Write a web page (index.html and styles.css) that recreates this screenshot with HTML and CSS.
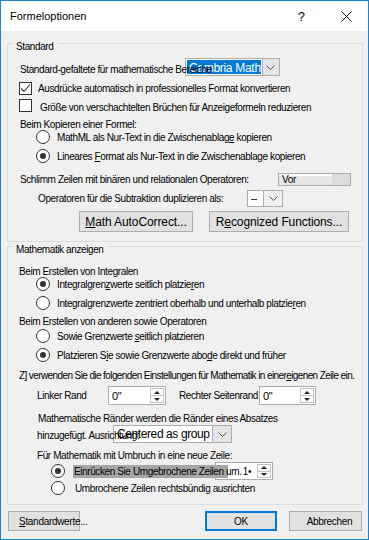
FILE: index.html
```html
<!DOCTYPE html>
<html lang="de">
<head>
    <meta charset="UTF-8">
    <meta name="viewport" content="width=device-width, initial-scale=1.0">
    <title>Formeloptionen</title>
    <link rel="stylesheet" href="styles.css">
</head>
<body>
<div class="window">
    <div class="titlebar">
        <span class="title">Formeloptionen</span>
        <span class="help">?</span>
        <span class="close">
            <svg width="11" height="11" viewBox="0 0 11 11"><path d="M0.5 0.5L10.5 10.5M10.5 0.5L0.5 10.5" stroke="#111" stroke-width="1" fill="none"/></svg>
        </span>
    </div>

    <div class="content">
        <!-- Standard -->
        <div class="group group-std">
            <div class="group-title">Standard</div>

            <div class="row r-font">
                <span class="lbl lbl-font">Standard-gefaltete für mathematische Bereiche</span>
                <div class="combo combo-font">
                    <span class="sel">Cambria Math</span>
                    <span class="drop"><svg width="9" height="5" viewBox="0 0 9 5"><path d="M0.5 0.5L4.5 4.5L8.5 0.5" fill="none" stroke="#555"/></svg></span>
                </div>
            </div>

            <div class="row r-cb1">
                <span class="checkbox">
                    <svg width="11" height="11" viewBox="0 0 11 11"><path d="M1 5.5L4 8.5L10 1.5" fill="none" stroke="#333" stroke-width="1.1"/></svg>
                </span>
                <span class="cb-text">Ausdrücke automatisch in professionelles Format konvertieren</span>
            </div>

            <div class="row r-cb2">
                <span class="checkbox"></span>
                <span class="cb-text cb-text2">Größe von verschachtelten Brüchen für Anzeigeformeln reduzieren</span>
            </div>

            <div class="row r-label r-kop">Beim Kopieren einer Formel:</div>

            <div class="row r-radio r-rad1">
                <span class="radio"></span>
                <span class="radio-text">MathML als Nur-Text in die Zwischenablag<u>e</u> kopieren</span>
            </div>
            <div class="row r-radio r-rad2">
                <span class="radio checked"></span>
                <span class="radio-text">Lineares <u>F</u>ormat als Nur-Text in die Zwischenablage kopieren</span>
            </div>

            <div class="row r-break">
                <span class="lbl">Schlimm Zeilen mit binären und relationalen Operatoren:</span>
                <div class="combo combo-break">
                    <span class="combo-val">Vor</span>
                    <span class="drop drop-flat"></span>
                </div>
            </div>

            <div class="row r-minus">
                <span class="lbl lbl-minus">Operatoren für die Subtraktion duplizieren als:</span>
                <div class="combo combo-minus">
                    <span class="combo-val">--</span>
                    <span class="drop"><svg width="9" height="5" viewBox="0 0 9 5"><path d="M0.5 0.5L4.5 4.5L8.5 0.5" fill="none" stroke="#555"/></svg></span>
                </div>
            </div>

            <div class="row r-btns">
                <button class="btn btn-autocorrect"><u>M</u>ath AutoCorrect...</button>
                <button class="btn btn-functions">R<u>e</u>cognized Functions...</button>
            </div>
        </div>

        <!-- Mathematik anzeigen -->
        <div class="group group-disp">
            <div class="group-title">Mathematik anzeigen</div>

            <div class="row r-label r-integ">Beim Erstellen von Integralen</div>
            <div class="row r-radio r-rad3">
                <span class="radio checked"></span>
                <span class="radio-text">Integralgren<u>z</u>werte seitlich platzie<u>r</u>en</span>
            </div>
            <div class="row r-radio r-rad4">
                <span class="radio"></span>
                <span class="radio-text">Integralgrenzwerte zentriert oberhalb und unterhalb platzie<u>r</u>en</span>
            </div>

            <div class="row r-label r-other">Beim Erstellen von anderen sowie Operatoren</div>
            <div class="row r-radio r-rad5">
                <span class="radio"></span>
                <span class="radio-text">Sowie Grenzwerte <u>s</u>eitlich platzieren</span>
            </div>
            <div class="row r-radio r-rad6">
                <span class="radio checked"></span>
                <span class="radio-text">Platzieren S<u>i</u>e sowie Grenzwerte abo<u>d</u>e direkt und früher</span>
            </div>

            <div class="row r-label r-zeile">Z] verwenden Sie die folgenden Einstellungen für Mathematik in einer <u>e</u>igenen Zeile ein.</div>

            <div class="row r-margins">
                <span class="lbl lbl-left">Linker Rand</span>
                <div class="spin spin-left">
                    <span class="spin-val">0"</span>
                    <span class="spin-btns"><span class="up"></span><span class="down"></span></span>
                </div>
                <span class="lbl lbl-right">Rechter Seitenrand</span>
                <div class="spin spin-right">
                    <span class="spin-val">0"</span>
                    <span class="spin-btns"><span class="up"></span><span class="down"></span></span>
                </div>
            </div>

            <div class="row r-label r-raender">Mathematische Ränder werden die Ränder eines Absatzes</div>

            <div class="row r-align">
                <span class="lbl lbl-align">hinzugefügt. Ausrichtung:</span>
                <div class="combo combo-align">
                    <span class="combo-val">Centered as group</span>
                    <span class="drop"><svg width="9" height="5" viewBox="0 0 9 5"><path d="M0.5 0.5L4.5 4.5L8.5 0.5" fill="none" stroke="#555"/></svg></span>
                </div>
            </div>

            <div class="row r-label r-wrap">Für Mathematik mit Umbruch in eine neue Zeile:</div>

            <div class="row r-indent">
                <span class="radio checked"></span>
                <span class="lbl lbl-indent">Einrücken Sie Umgebrochene Zeilen um.</span>
                <div class="spin spin-indent">
                    <span class="spin-val">1•</span>
                    <span class="spin-btns"><span class="up"></span><span class="down"></span></span>
                </div>
            </div>
            <div class="row r-right">
                <span class="radio"></span>
                <span class="radio-text">Umbrochene Zeilen rechtsbündig ausrichten</span>
            </div>
        </div>

        <div class="footer">
            <button class="btn btn-default"><u>S</u>tandardwerte...</button>
            <button class="btn btn-ok">OK</button>
            <button class="btn btn-cancel">Abbrechen</button>
        </div>
    </div>
</div>
</body>
</html>
```

FILE: styles.css
```css
body {
    margin: 0;
    padding: 0;
    font-family: "Liberation Sans", Arial, sans-serif;
    font-size: 10px;
    letter-spacing: -0.4px;
    color: #000;
    background-color: #fff;
}

.window {
    box-sizing: border-box;
    width: 369px;
    height: 540px;
    border: 1px solid #1883d7;
    background-color: #f0f0f0;
    display: flex;
    flex-direction: column;
}

/* title bar */
.titlebar {
    height: 30px;
    background-color: #fff;
    display: flex;
    align-items: center;
    padding-left: 9px;
}

.title {
    font-size: 11px;
    letter-spacing: 0;
}

.help {
    margin-left: auto;
    font-size: 13px;
    letter-spacing: 0;
}

.close {
    display: flex;
    margin-left: 36px;
    margin-right: 16px;
}

.content {
    padding: 12px 5px 0 6px;
}

/* group boxes */
.group {
    border: 1px solid #dcdcdc;
    display: flex;
    flex-direction: column;
    padding-bottom: 9px;
}

.group-disp {
    margin-top: 4px;
}

.group-title {
    align-self: flex-start;
    height: 12px;
    line-height: 12px;
    margin: -3px 0 0 5px;
    padding: 0 5px 0 3px;
    background-color: #f0f0f0;
}

.row {
    display: flex;
    align-items: center;
    white-space: nowrap;
}

.lbl {
    position: relative;
    z-index: 1;
}

.r-label {
    height: 12px;
    padding-left: 11px;
}

/* checkboxes */
.checkbox {
    box-sizing: border-box;
    width: 13px;
    height: 13px;
    border: 1px solid #333;
    background-color: #fff;
    display: flex;
    align-items: center;
    justify-content: center;
}

.cb-text {
    margin-left: 6px;
}

.cb-text2 {
    margin-left: 8px;
    padding-top: 3px;
}

/* radios */
.radio {
    box-sizing: border-box;
    width: 14px;
    height: 14px;
    border: 1px solid #333;
    border-radius: 50%;
    background-color: #fff;
    display: flex;
    align-items: center;
    justify-content: center;
    flex-shrink: 0;
}

.radio.checked::after {
    content: "";
    width: 6px;
    height: 6px;
    border-radius: 50%;
    background-color: #333;
}

.r-radio {
    height: 14px;
    padding-left: 28px;
}

.radio-text {
    margin-left: 7px;
}

/* combos */
.combo {
    box-sizing: border-box;
    display: flex;
    border: 1px solid #adadad;
    background-color: #fff;
}

.drop {
    width: 18px;
    display: flex;
    align-items: center;
    justify-content: center;
    background-color: #e5e5e5;
    border-left: 1px solid #adadad;
}

.combo-val {
    flex: 1;
    display: flex;
    align-items: center;
    padding-left: 3px;
}

/* standard group rows */
.r-font {
    margin-top: 5px;
    height: 18px;
    padding-left: 12px;
}

.lbl-font {
    width: 165px;
    padding-top: 4px;
}

.combo-font {
    width: 95px;
    height: 18px;
    padding: 1px;
}

.sel {
    flex: 1;
    background-color: #0078d7;
    color: #fff;
    font-size: 12px;
    letter-spacing: -0.3px;
    line-height: 16px;
    padding-left: 2px;
    margin-right: 1px;
}

.combo-font .drop {
    margin: -1px -1px -1px 0;
}

.r-cb1 {
    margin-top: 6px;
    height: 13px;
    padding-left: 11px;
}

.r-cb2 {
    margin-top: 4px;
    height: 13px;
    padding-left: 11px;
}

.r-kop {
    margin-top: 6px;
    padding-left: 12px;
}

.r-rad2 {
    margin-top: 5px;
}

.r-break {
    margin-top: 10px;
    height: 13px;
    padding-left: 12px;
}

.combo-break {
    margin-left: auto;
    margin-right: 11px;
    width: 73px;
    height: 13px;
    background: linear-gradient(#fff 0 2px, #e6e6e6 2px);
}

.combo-break .combo-val {
    padding-left: 3px;
}

.drop-flat {
    background-color: #dcdcdc;
    border-left: none;
}

.r-minus {
    margin-top: 4px;
    height: 17px;
    padding-left: 30px;
}

.lbl-minus {
    width: 209px;
}

.combo-minus {
    width: 36px;
    height: 17px;
}

.combo-minus .drop {
    background-color: #f0f0f0;
}

.r-btns {
    margin-top: 4px;
    height: 21px;
    padding-left: 71px;
    gap: 16px;
}

/* buttons */
.btn {
    box-sizing: border-box;
    height: 21px;
    padding: 0;
    background-color: #e1e1e1;
    border: 1px solid #adadad;
    font-family: "Liberation Sans", Arial, sans-serif;
    font-size: 12px;
    letter-spacing: -0.1px;
    color: #000;
    white-space: nowrap;
}

.btn-autocorrect {
    width: 114px;
}

.btn-functions {
    width: 140px;
}

/* display group rows */
.r-integ {
    margin-top: 9px;
}

.r-rad4 {
    margin-top: 5px;
}

.r-other {
    margin-top: 5px;
}

.r-rad5 {
    margin-top: 2px;
}

.r-rad6 {
    margin-top: 5px;
}

.r-zeile {
    margin-top: 7px;
    letter-spacing: -0.6px;
}

.r-margins {
    margin-top: 5px;
    height: 19px;
    padding-left: 29px;
}

.lbl-left {
    width: 71px;
}

.lbl-right {
    margin-left: 13px;
    width: 80px;
}

/* spin boxes */
.spin {
    box-sizing: border-box;
    display: flex;
    height: 19px;
    border: 1px solid #adadad;
    background-color: #fff;
}

.spin-left {
    width: 58px;
}

.spin-right {
    width: 57px;
}

.spin-val {
    flex: 1;
    display: flex;
    align-items: center;
    padding-left: 3px;
    font-size: 11px;
}

.spin-btns {
    width: 14px;
    display: flex;
    flex-direction: column;
    padding: 1px 1px 1px 0;
}

.spin-btns span {
    flex: 1;
    display: flex;
    align-items: center;
    justify-content: center;
    border: 1px solid #c4c4c4;
}

.spin-btns .down {
    border-top: none;
}

.spin-btns .up::after {
    content: "";
    border-left: 3px solid transparent;
    border-right: 3px solid transparent;
    border-bottom: 3px solid #222;
}

.spin-btns .down::after {
    content: "";
    border-left: 3px solid transparent;
    border-right: 3px solid transparent;
    border-top: 3px solid #222;
}

.r-raender {
    margin-top: 7px;
    padding-left: 30px;
}

.r-align {
    margin-top: 1px;
    height: 18px;
    padding-left: 29px;
}

.lbl-align {
    width: 76px;
    padding-top: 2px;
}

.combo-align {
    width: 119px;
    height: 18px;
}

.combo-align .combo-val {
    font-size: 12px;
    letter-spacing: -0.4px;
}

.r-wrap {
    margin-top: 6px;
    padding-left: 29px;
}

.r-indent {
    margin-top: 1px;
    height: 18px;
    padding-left: 43px;
}

.lbl-indent {
    width: 154px;
    margin-left: 8px;
    padding-left: 1px;
    line-height: 13px;
    background-color: #a6a6a6;
}

.spin-indent {
    width: 58px;
    height: 18px;
    margin-left: -13px;
}

.spin-indent .spin-val {
    justify-content: flex-end;
    padding-right: 6px;
    font-size: 10px;
}

.r-right {
    margin-top: 1px;
    height: 14px;
    padding-left: 43px;
}

.r-right .radio-text {
    margin-left: 10px;
}

/* footer */
.footer {
    display: flex;
    margin-top: 6px;
    padding: 0 1px;
}

.footer .btn {
    height: 20px;
    font-size: 10px;
    letter-spacing: -0.3px;
}

.btn-default {
    width: 72px;
    text-align: left;
    padding-left: 10px;
    overflow: visible;
}

.btn-ok {
    width: 72px;
    margin-left: auto;
    border: 2px solid #0078d7;
}

.btn-cancel {
    width: 73px;
    margin-left: 12px;
    padding-left: 8px;
}
```
